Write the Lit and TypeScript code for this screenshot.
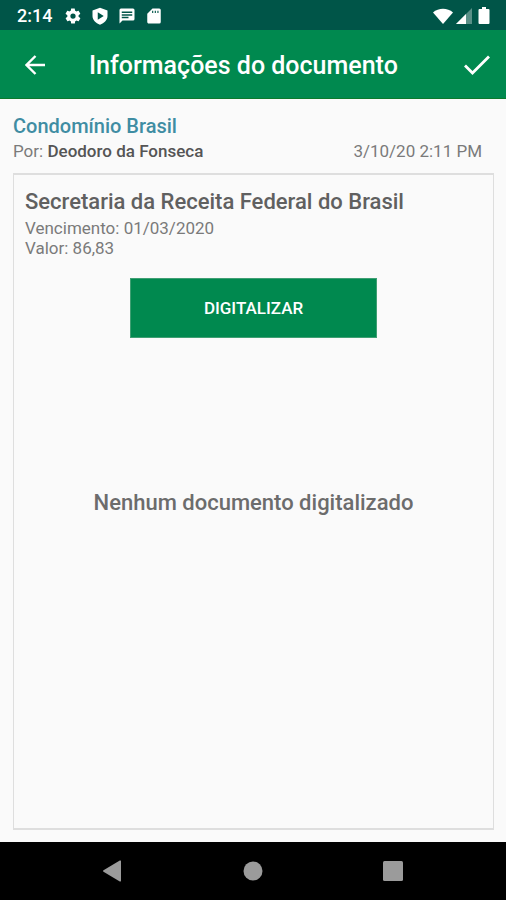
import { LitElement, html, css } from "lit";
import { customElement } from "lit/decorators.js";

@customElement("status-bar")
class StatusBar extends LitElement {
  static styles = css`
    :host {
      display: flex;
      align-items: center;
      box-sizing: border-box;
      height: 30px;
      padding: 2px 13px 0 17px;
      background: #005548;
      color: #fff;
    }
    .time {
      font-size: 18px;
      font-weight: 500;
      line-height: 24px;
      margin-right: 12px;
    }
    .group {
      display: flex;
      align-items: center;
      gap: 9px;
    }
    .right {
      gap: 3px;
      margin-left: auto;
    }
    svg {
      display: block;
      fill: currentColor;
    }
  `;

  render() {
    return html`
      <span class="time">2:14</span>
      <div class="group">
        <svg width="18" height="18" viewBox="0 0 24 24" aria-hidden="true">
          <path
            d="M19.4 13c0-.3.1-.6.1-1s0-.7-.1-1l2.100-1.600c.2-.2.2-.4.1-.6l-2-3.500c-.1-.2-.4-.3-.6-.2l-2.500 1c-.5-.4-1.100-.7-1.700-1l-.4-2.600c0-.2-.2-.4-.5-.4h-4c-.2 0-.5.200-.5.400l-.4 2.600c-.6.300-1.200.600-1.700 1l-2.500-1c-.2-.1-.5 0-.6.200l-2 3.500c-.1.200-.1.500.1.600L4.500 11c0 .3-.1.700-.1 1s0 .7.100 1l-2.100 1.600c-.2.200-.2.400-.1.600l2 3.500c.1.200.4.300.6.200l2.500-1c.5.400 1.100.7 1.700 1l.4 2.600c0 .2.200.4.500.4h4c.2 0 .5-.2.500-.4l.4-2.600c.6-.3 1.200-.6 1.700-1l2.500 1c.2.100.5 0 .6-.2l2-3.500c.1-.2.100-.5-.1-.6L19.400 13zM12 15.500a3.500 3.500 0 1 1 0-7 3.500 3.500 0 0 1 0 7z"
          />
        </svg>
        <svg width="18" height="18" viewBox="0 0 24 24" aria-hidden="true">
          <path
            fill-rule="evenodd"
            d="M12 1 2 4.500V12c0 5.300 4.200 9.600 10 11.500 5.800-1.900 10-6.200 10-11.500V4.500L12 1zM9 7v10l8-5-8-5z"
          />
        </svg>
        <svg width="18" height="18" viewBox="0 0 24 24" aria-hidden="true">
          <path
            fill-rule="evenodd"
            d="M20 2H4a2 2 0 0 0-2 2v18l4-4h14a2 2 0 0 0 2-2V4a2 2 0 0 0-2-2zM5 6h14v2H5V6zm0 3.500h14v2H5v-2zM5 13h9v2H5v-2z"
          />
        </svg>
        <svg width="18" height="18" viewBox="0 0 24 24" aria-hidden="true">
          <path
            fill-rule="evenodd"
            d="M19 2h-9L3 9v11c0 1.100.9 2 2 2h14a2 2 0 0 0 2-2V4a2 2 0 0 0-2-2zM9.500 5h1.500v3H9.500V5zm3.500 0h1.500v3H13V5zm3.500 0H18v3h-1.500V5z"
          />
        </svg>
      </div>
      <div class="group right">
        <svg width="20" height="16" viewBox="0 0 20 16" aria-hidden="true">
          <path d="M0 4.500C5.500-.5 14.500-.5 20 4.500L10 16z" />
        </svg>
        <svg width="16" height="16" viewBox="0 0 16 16" aria-hidden="true">
          <path opacity=".35" d="M0 16 16 0v16z" />
          <path d="M0 16 10 6v10z" />
        </svg>
        <svg width="18" height="18" viewBox="0 0 18 18" aria-hidden="true">
          <path
            d="M7 0h4v2h2.500a1 1 0 0 1 1 1v13a1 1 0 0 1-1 1h-9a1 1 0 0 1-1-1V3a1 1 0 0 1 1-1H7z"
          />
        </svg>
      </div>
    `;
  }
}

@customElement("app-bar")
class AppBar extends LitElement {
  static styles = css`
    :host {
      display: flex;
      align-items: center;
      box-sizing: border-box;
      height: 69px;
      padding: 2px 10px 0 16px;
      border-bottom: 1px solid #0b7a2c;
      background: #00894f;
      color: #fff;
    }
    h1 {
      flex: 1;
      margin: 2px 0 0 35px;
      font-size: 25px;
      font-weight: 500;
      line-height: 32px;
      white-space: nowrap;
    }
    button {
      display: grid;
      place-items: center;
      width: 38px;
      height: 38px;
      padding: 0;
      border: 0;
      background: none;
      color: inherit;
    }
    svg {
      fill: none;
      stroke: currentColor;
    }
  `;

  render() {
    return html`
      <button type="button" aria-label="Voltar">
        <svg width="20" height="20" viewBox="0 0 20 20" stroke-width="2.400">
          <path d="M20 10H2M10.500 1 1.500 10l9 9" />
        </svg>
      </button>
      <h1>Informações do documento</h1>
      <button type="button" aria-label="Confirmar">
        <svg width="26" height="20" viewBox="0 0 26 20" stroke-width="2.800">
          <path d="M1 10.500 8.500 18 25 1.500" />
        </svg>
      </button>
    `;
  }
}

@customElement("nav-bar")
class NavBar extends LitElement {
  static styles = css`
    :host {
      display: flex;
      justify-content: center;
      align-items: center;
      gap: 100px;
      height: 58px;
      background: #000;
      color: #9b9b9b;
    }
    button {
      display: grid;
      place-items: center;
      width: 40px;
      height: 40px;
      padding: 0;
      border: 0;
      background: none;
      color: inherit;
    }
    svg {
      fill: currentColor;
    }
  `;

  render() {
    return html`
      <button type="button" aria-label="Voltar">
        <svg width="20" height="22" viewBox="0 0 20 22">
          <path d="M18 1.200v19.600a.8.800 0 0 1-1.200.700L.5 11.700a.8.800 0 0 1 0-1.400L16.800.5a.8.800 0 0 1 1.200.7z" />
        </svg>
      </button>
      <button type="button" aria-label="Início">
        <svg width="20" height="20" viewBox="0 0 20 20"><circle cx="10" cy="10" r="9.500" /></svg>
      </button>
      <button type="button" aria-label="Recentes">
        <svg width="20" height="20" viewBox="0 0 20 20"><rect width="20" height="20" rx="1.500" /></svg>
      </button>
    `;
  }
}

@customElement("app-root")
class AppRoot extends LitElement {
  static styles = css`
    :host {
      display: flex;
      flex-direction: column;
      min-height: 100vh;
      background: #fafafa;
      color: #7a7a7a;
      font-family: Roboto, "Liberation Sans", sans-serif;
    }
    main {
      flex: 1;
      display: flex;
      flex-direction: column;
      padding: 14px 12px 12px 13px;
    }
    h2,
    h3,
    p {
      margin: 0;
    }
    h2 {
      color: #3f8da3;
      font-size: 20px;
      font-weight: 500;
      line-height: 26px;
    }
    .meta {
      display: flex;
      justify-content: space-between;
      padding-right: 12px;
      font-size: 17px;
      line-height: 24px;
    }
    .meta strong {
      color: #555;
      font-weight: 500;
    }
    .card {
      flex: 1;
      display: grid;
      margin-top: 10px;
      padding: 12px 11px 10px;
      border: solid #dedede;
      border-width: 2px 1px;
    }
    .details,
    .empty {
      grid-area: 1 / 1;
    }
    .details {
      font-size: 17px;
      line-height: 20px;
    }
    h3 {
      margin-bottom: 1px;
      color: #606060;
      font-size: 22px;
      font-weight: 500;
      line-height: 30px;
    }
    .scan {
      display: block;
      width: 247px;
      height: 60px;
      margin: 20px auto 0;
      padding: 0;
      border: 1px solid #3f9f73;
      background: #00894f;
      color: #fff;
      font: 500 17px/24px Roboto, "Liberation Sans", sans-serif;
      text-transform: uppercase;
    }
    .empty {
      align-self: center;
      justify-self: center;
      color: #6c6c6c;
      font-size: 22px;
      font-weight: 500;
      line-height: 30px;
    }
  `;

  render() {
    return html`
      <status-bar></status-bar>
      <app-bar></app-bar>
      <main>
        <h2>Condomínio Brasil</h2>
        <div class="meta">
          <span>Por: <strong>Deodoro da Fonseca</strong></span>
          <time>3/10/20 2:11 PM</time>
        </div>
        <section class="card">
          <div class="details">
            <h3>Secretaria da Receita Federal do Brasil</h3>
            <p>Vencimento: 01/03/2020</p>
            <p>Valor: 86,83</p>
            <button class="scan" type="button">Digitalizar</button>
          </div>
          <p class="empty">Nenhum documento digitalizado</p>
        </section>
      </main>
      <nav-bar></nav-bar>
    `;
  }
}
